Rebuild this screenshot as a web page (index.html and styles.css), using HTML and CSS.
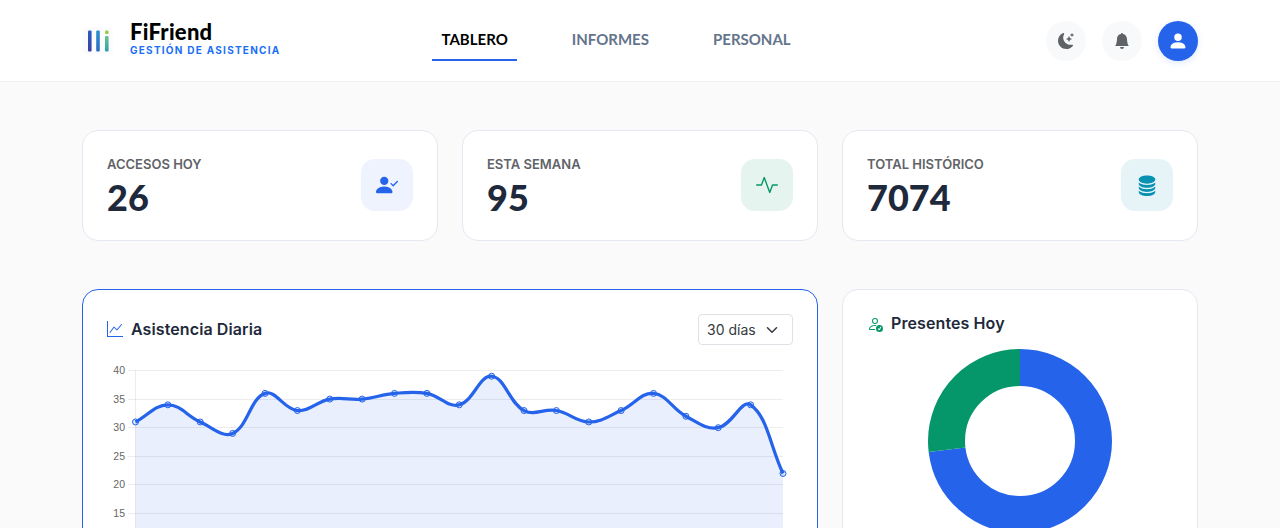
FILE: index.html
```html
<!DOCTYPE html>
<html lang="es">
<head>
<meta charset="utf-8">
<title>FiFriend</title>
<link rel="stylesheet" href="styles.css">
</head>
<body>
<header class="topbar">
  <div class="brand">
    <svg class="brand-mark" viewBox="0 0 30 28" width="30" height="28" aria-hidden="true">
      <defs>
        <linearGradient id="b1" x1="0" y1="0" x2="0" y2="1"><stop offset="0" stop-color="#2b5cc4"/><stop offset="1" stop-color="#3b3f9e"/></linearGradient>
        <linearGradient id="b2" x1="0" y1="0" x2="0" y2="1"><stop offset="0" stop-color="#2a8fd6"/><stop offset="1" stop-color="#2b6cc0"/></linearGradient>
        <linearGradient id="b3" x1="0" y1="0" x2="0" y2="1"><stop offset="0" stop-color="#6cc48a"/><stop offset="1" stop-color="#2a9fa8"/></linearGradient>
      </defs>
      <rect width="30" height="28" rx="5" fill="#fbfbfd"/>
      <rect x="5" y="3.5" width="3.6" height="21" rx="1" fill="url(#b1)"/>
      <rect x="13.2" y="3.5" width="3.6" height="21" rx="1" fill="url(#b2)"/>
      <rect x="22" y="3.5" width="3.6" height="3.6" rx="1.2" fill="#9ccc4a"/>
      <rect x="22" y="9" width="3.6" height="15.5" rx="1" fill="url(#b3)"/>
    </svg>
    <div class="brand-text">
      <span class="brand-name">FiFriend</span>
      <span class="brand-tag">GESTIÓN DE ASISTENCIA</span>
    </div>
  </div>
  <nav class="nav">
    <a class="nav-link is-active">TABLERO</a>
    <a class="nav-link">INFORMES</a>
    <a class="nav-link">PERSONAL</a>
  </nav>
  <div class="actions">
    <button class="round-btn"><svg class="ico-16" viewBox="0 0 16 16" fill="currentColor"><path d="M6 .278a.768.768 0 0 1 .08.858 7.208 7.208 0 0 0-.878 3.46c0 4.021 3.278 7.277 7.318 7.277.527 0 1.04-.055 1.533-.16a.787.787 0 0 1 .81.316.733.733 0 0 1-.031.893A8.349 8.349 0 0 1 8.344 16C3.734 16 0 12.286 0 7.71 0 4.266 2.114 1.312 5.124.06A.752.752 0 0 1 6 .278z"/><path d="M10.794 3.148a.217.217 0 0 1 .412 0l.387 1.162c.173.518.579.924 1.097 1.097l1.162.387a.217.217 0 0 1 0 .412l-1.162.387a1.734 1.734 0 0 0-1.097 1.097l-.387 1.162a.217.217 0 0 1-.412 0l-.387-1.162A1.734 1.734 0 0 0 9.31 6.593l-1.162-.387a.217.217 0 0 1 0-.412l1.162-.387a1.734 1.734 0 0 0 1.097-1.097l.387-1.162zM13.863.099a.145.145 0 0 1 .274 0l.258.774c.115.346.386.617.732.732l.774.258a.145.145 0 0 1 0 .274l-.774.258a1.156 1.156 0 0 0-.732.732l-.258.774a.145.145 0 0 1-.274 0l-.258-.774a1.156 1.156 0 0 0-.732-.732l-.774-.258a.145.145 0 0 1 0-.274l.774-.258c.346-.115.617-.386.732-.732L13.863.1z"/></svg></button>
    <button class="round-btn"><svg class="ico-16" viewBox="0 0 16 16" fill="currentColor"><path d="M8 16a2 2 0 0 0 2-2H6a2 2 0 0 0 2 2zm.995-14.901a1 1 0 1 0-1.99 0A5.002 5.002 0 0 0 3 6c0 1.098-.5 6-2 7h14c-1.5-1-2-5.902-2-7 0-2.42-1.72-4.44-4.005-4.901z"/></svg></button>
    <button class="round-btn round-btn-primary"><svg class="ico-20" viewBox="0 0 16 16" fill="currentColor"><path d="M3 14s-1 0-1-1 1-4 6-4 6 3 6 4-1 1-1 1H3Zm5-6a3 3 0 1 0 0-6 3 3 0 0 0 0 6Z"/></svg></button>
  </div>
</header>

<main class="page">
  <section class="stats">
    <article class="card stat">
      <div class="stat-text">
        <div class="stat-label">ACCESOS HOY</div>
        <div class="stat-value">26</div>
      </div>
      <div class="stat-icon tint-blue"><svg class="ico-22" viewBox="0 0 16 16" fill="currentColor"><path d="M15.854 5.146a.5.5 0 0 1 0 .708l-3 3a.5.5 0 0 1-.708 0l-1.5-1.5a.5.5 0 0 1 .708-.708L12.5 7.793l2.646-2.647a.5.5 0 0 1 .708 0z"/><path d="M1 14s-1 0-1-1 1-4 6-4 6 3 6 4-1 1-1 1H1zm5-6a3 3 0 1 0 0-6 3 3 0 0 0 0 6z"/></svg></div>
    </article>
    <article class="card stat">
      <div class="stat-text">
        <div class="stat-label">ESTA SEMANA</div>
        <div class="stat-value">95</div>
      </div>
      <div class="stat-icon tint-green"><svg class="ico-22" viewBox="0 0 16 16" fill="currentColor"><path d="M6 2a.5.5 0 0 1 .47.33L10 12.036l1.53-4.208A.5.5 0 0 1 12 7.5h3.5a.5.5 0 0 1 0 1h-3.15l-1.88 5.17a.5.5 0 0 1-.94 0L6 3.964 4.47 8.171A.5.5 0 0 1 4 8.5H.5a.5.5 0 0 1 0-1h3.15l1.88-5.17A.5.5 0 0 1 6 2Z"/></svg></div>
    </article>
    <article class="card stat">
      <div class="stat-text">
        <div class="stat-label">TOTAL HISTÓRICO</div>
        <div class="stat-value">7074</div>
      </div>
      <div class="stat-icon tint-cyan"><svg class="ico-22" viewBox="0 0 16 16" fill="currentColor"><path d="M3.904 1.777C4.978 1.289 6.427 1 8 1s3.022.289 4.096.777C13.125 2.245 14 2.993 14 4s-.875 1.755-1.904 2.223C11.022 6.711 9.573 7 8 7s-3.022-.289-4.096-.777C2.875 5.755 2 5.007 2 4s.875-1.755 1.904-2.223Z"/><path d="M2 6.161V7c0 1.007.875 1.755 1.904 2.223C4.978 9.71 6.427 10 8 10s3.022-.289 4.096-.777C13.125 8.755 14 8.007 14 7v-.839c-.457.432-1.004.751-1.49.972C11.278 7.693 9.682 8 8 8s-3.278-.307-4.51-.867c-.486-.22-1.033-.54-1.49-.972Z"/><path d="M2 9.161V10c0 1.007.875 1.755 1.904 2.223C4.978 12.711 6.427 13 8 13s3.022-.289 4.096-.777C13.125 11.755 14 11.007 14 10v-.839c-.457.432-1.004.751-1.49.972-1.232.56-2.828.867-4.51.867s-3.278-.307-4.51-.867c-.486-.22-1.033-.54-1.49-.972Z"/><path d="M2 12.161V13c0 1.007.875 1.755 1.904 2.223C4.978 15.711 6.427 16 8 16s3.022-.289 4.096-.777C13.125 14.755 14 14.007 14 13v-.839c-.457.432-1.004.751-1.49.972-1.232.56-2.828.867-4.51.867s-3.278-.307-4.51-.867c-.486-.22-1.033-.54-1.49-.972Z"/></svg></div>
    </article>
  </section>

  <section class="panels">
    <article class="card panel panel-wide">
      <div class="panel-head">
        <h2 class="panel-title"><svg class="ico-16 tone-blue" viewBox="0 0 16 16" fill="currentColor"><path d="M0 0h1v15h15v1H0V0Zm14.817 3.113a.5.5 0 0 1 .07.704l-4.5 5.5a.5.5 0 0 1-.74.037L7.06 6.767l-3.656 5.027a.5.5 0 0 1-.808-.588l4-5.5a.5.5 0 0 1 .758-.06l2.609 2.61 4.15-5.073a.5.5 0 0 1 .704-.07Z"/></svg>Asistencia Diaria</h2>
        <div class="select">30 días<svg class="chevron" viewBox="0 0 16 16" fill="none" stroke="currentColor" stroke-width="2" stroke-linecap="round" stroke-linejoin="round"><path d="m2 5 6 6 6-6"/></svg></div>
      </div>
      <svg id="daily-chart" class="line-chart" viewBox="107 361 686 240" width="686" height="240"></svg>
    </article>
    <article class="card panel">
      <h2 class="panel-title panel-title-donut"><svg class="ico-16 tone-green" viewBox="0 0 16 16" fill="currentColor"><path d="M12.5 16a3.5 3.5 0 1 0 0-7 3.5 3.5 0 0 0 0 7Zm1.679-4.493-1.335 2.226a.75.75 0 0 1-1.174.144l-.774-.773a.5.5 0 0 1 .708-.708l.547.548 1.17-1.951a.5.5 0 1 1 .858.514ZM11 5a3 3 0 1 1-6 0 3 3 0 0 1 6 0ZM8 7a2 2 0 1 0 0-4 2 2 0 0 0 0 4Z"/><path d="M8.256 14a4.474 4.474 0 0 1-.229-1.004H3c.001-.246.154-.986.832-1.664C4.484 10.68 5.711 10 8 10c.26 0 .507.009.74.025.226-.341.496-.65.804-.918C9.077 9.038 8.564 9 8 9c-5 0-6 3-6 4s1 1 1 1h5.256Z"/></svg>Presentes Hoy</h2>
      <svg class="donut" viewBox="0 0 184 184" width="184" height="184">
        <g transform="rotate(-90 92 92)" fill="none" stroke-width="37">
          <circle cx="92" cy="92" r="73.5" pathLength="26" stroke="#2563eb" stroke-dasharray="19 7"/>
          <circle cx="92" cy="92" r="73.5" pathLength="26" stroke="#059669" stroke-dasharray="7 19" stroke-dashoffset="-19"/>
        </g>
      </svg>
    </article>
  </section>
</main>
<script src="chart.js"></script>
</body>
</html>
```
FILE: styles.css
```css
* { box-sizing: border-box; }
html, body { margin: 0; height: 528px; overflow: hidden; }
body {
  background: #fafafb;
  color: #1e293b;
  font-family: Inter, "Liberation Sans", sans-serif;
}

.topbar {
  display: flex;
  align-items: center;
  height: 82px;
  padding: 0 82px 0 83px;
  background: #fff;
  border-bottom: 1px solid #f0f1f3;
}
.brand { display: flex; align-items: center; gap: 17px; }
.brand-mark { display: block; }
.brand-text { display: flex; flex-direction: column; margin-bottom: 6px; }
.brand-name {
  font-family: Lato, sans-serif;
  font-size: 22px;
  font-weight: 900;
  line-height: 24px;
  letter-spacing: .25px;
  color: #000;
}
.brand-tag {
  font-size: 10px;
  font-weight: 700;
  line-height: 12px;
  letter-spacing: 1.25px;
  color: #1a6ff5;
}
.nav { display: flex; gap: 46px; margin-left: 152px; margin-bottom: 2px; }
.nav-link {
  padding: 10px 9px;
  font-family: Lato, sans-serif;
  font-size: 15px;
  font-weight: 700;
  line-height: 20px;
  color: #64748b;
  border-bottom: 2px solid transparent;
}
.nav-link.is-active { color: #000; border-bottom-color: #2563eb; }
.actions { display: flex; gap: 16px; margin-left: auto; }
.round-btn {
  display: flex;
  align-items: center;
  justify-content: center;
  width: 40px;
  height: 40px;
  padding: 0;
  border: 0;
  border-radius: 50%;
  background: #f8f9fa;
  color: #5f6368;
}
.round-btn-primary { background: #2563eb; color: #fff; box-shadow: 0 2px 6px rgba(37, 99, 235, .15); }
.ico-16 { display: block; width: 16px; height: 16px; flex: none; }
.ico-20 { display: block; width: 20px; height: 20px; }
.ico-22 { display: block; width: 22px; height: 22px; }

.page { padding: 48px 82px 0; }
.stats, .panels { display: grid; grid-template-columns: repeat(3, 356px); gap: 24px; }
.panels { margin-top: 48px; }
.card {
  background: #fff;
  border: 1px solid #e4e9f1;
  border-radius: 16px;
}
.stat {
  display: flex;
  align-items: center;
  justify-content: space-between;
  height: 111px;
  padding: 0 24px;
}
.stat-text { padding-top: 1px; }
.stat-label {
  margin-bottom: 5px;
  font-size: 13px;
  font-weight: 600;
  line-height: 16px;
  color: #5f6368;
}
.stat-value {
  font-family: Lato, sans-serif;
  font-size: 36px;
  font-weight: 900;
  line-height: 40px;
  color: #1e293b;
}
.stat-icon {
  display: flex;
  align-items: center;
  justify-content: center;
  width: 52px;
  height: 52px;
  margin-bottom: 1px;
  border-radius: 14px;
}
.tint-blue { background: #eef3fe; color: #2563eb; }
.tint-green { background: #e6f4f0; color: #059669; }
.tint-cyan { background: #e6f4f8; color: #0891b2; }

.panel { padding: 24px; height: 320px; }
.panel-wide { grid-column: span 2; border-color: #2563eb; }
.panel-head { display: flex; align-items: center; justify-content: space-between; margin-bottom: 16px; }
.panel-title {
  display: flex;
  align-items: center;
  gap: 8px;
  margin: 0;
  font-size: 16px;
  font-weight: 600;
  line-height: 19px;
  letter-spacing: .1px;
  color: #1e293b;
}
.panel-title-donut { margin-bottom: 16px; }
.tone-blue { color: #2563eb; margin-bottom: 1px; }
.tone-green { color: #059669; }
.select {
  display: flex;
  align-items: center;
  justify-content: space-between;
  width: 95px;
  height: 31px;
  padding: 0 14px 0 8px;
  border: 1px solid #dee2e6;
  border-radius: 4px;
  font-size: 14px;
  color: #343a40;
}
.chevron { display: block; width: 12px; height: 12px; color: #343a40; }
.line-chart { display: block; }
.donut { display: block; margin: 0 auto; }
.axis-label { font-family: "Liberation Sans", sans-serif; font-size: 10.5px; fill: #666; }
.grid-line { stroke: rgba(0, 0, 0, .07); stroke-width: 1; }
.area { fill: rgba(37, 99, 235, .1); stroke: none; }
.line { fill: none; stroke: #2563eb; stroke-width: 3.2; }
.dot { fill: rgba(37, 99, 235, .15); stroke: #2563eb; stroke-width: 1; }
```
FILE: chart.js
```js
(function () {
  var values = [31, 34, 31, 29, 36, 33, 35, 35, 36, 36, 34, 39, 33, 33, 31, 33, 36, 32, 30, 34, 22];
  var svg = document.getElementById('daily-chart');
  var NS = 'http://www.w3.org/2000/svg';
  var left = 135.5, right = 783, bottom = 600;
  var step = (right - left) / (values.length - 1);
  function yOf(v) { return 370.5 + (40 - v) * 5.72; }
  function el(name, attrs, text) {
    var n = document.createElementNS(NS, name);
    for (var k in attrs) n.setAttribute(k, attrs[k]);
    if (text) n.textContent = text;
    svg.appendChild(n);
    return n;
  }
  var pts = values.map(function (v, i) { return { x: left + i * step, y: yOf(v) }; });
  var T = 0.4;
  pts.forEach(function (p, i) {
    var a = pts[i - 1] || p, b = pts[i + 1] || p;
    var d1 = Math.hypot(p.x - a.x, p.y - a.y), d2 = Math.hypot(b.x - p.x, b.y - p.y);
    var s = d1 + d2 || 1;
    p.ix = p.x - T * d1 / s * (b.x - a.x);
    p.iy = p.y - T * d1 / s * (b.y - a.y);
    p.ox = p.x + T * d2 / s * (b.x - a.x);
    p.oy = p.y + T * d2 / s * (b.y - a.y);
  });
  var d = 'M' + pts[0].x + ' ' + pts[0].y;
  for (var i = 1; i < pts.length; i++) {
    var p = pts[i - 1], q = pts[i];
    d += 'C' + [p.ox, p.oy, q.ix, q.iy, q.x, q.y].join(' ');
  }
  [40, 35, 30, 25, 20, 15].forEach(function (v) {
    var y = Math.floor(yOf(v)) + 0.5;
    el('line', { 'class': 'grid-line', x1: 128, x2: right, y1: y, y2: y });
    el('text', { 'class': 'axis-label', x: 125, y: y + 3.5, 'text-anchor': 'end' }, String(v));
  });
  el('line', { 'class': 'grid-line', x1: left, x2: left, y1: 370, y2: bottom });
  el('path', { 'class': 'area', d: d + 'L' + right + ' ' + bottom + 'L' + left + ' ' + bottom + 'Z' });
  el('path', { 'class': 'line', d: d });
  pts.forEach(function (p) { el('circle', { 'class': 'dot', cx: p.x, cy: p.y, r: 3 }); });
})();
```
